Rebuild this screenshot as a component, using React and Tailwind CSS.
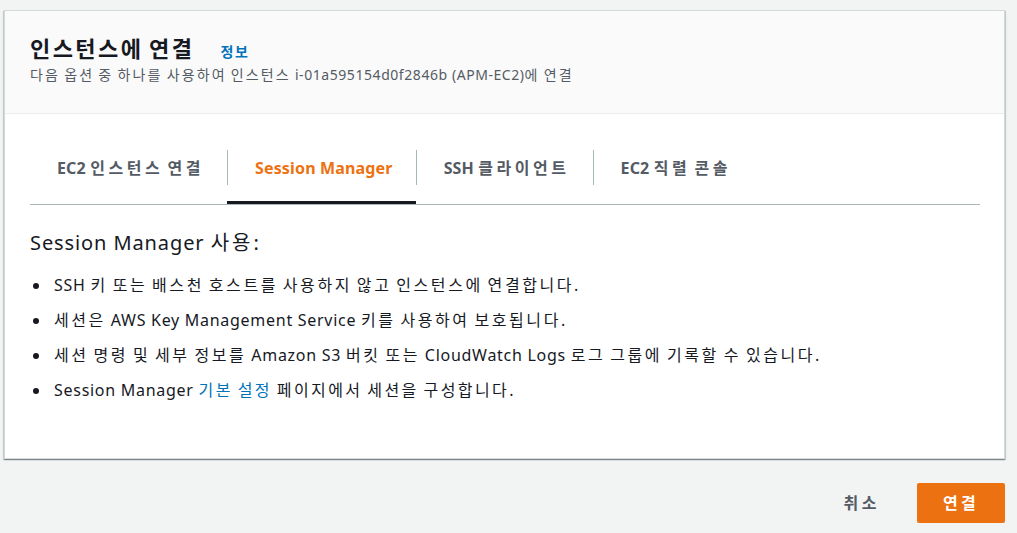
const font = { fontFamily: '"Noto Sans", "Noto Sans CJK KR", sans-serif' }

// Hangul runs get their own letter-spacing so the Korean reads as wide as the original
function K({ text, h }) {
  return text.split(/([\uac00-\ud7a3]+)/).map((p, i) =>
    /[\uac00-\ud7a3]/.test(p) ? (
      <span key={i} className={h}>
        {p}
      </span>
    ) : (
      p
    )
  )
}

const tabs = ['EC2 인스턴스 연결', 'Session Manager', 'SSH 클라이언트', 'EC2 직렬 콘솔']

const bullets = [
  'SSH 키 또는 배스천 호스트를 사용하지 않고 인스턴스에 연결합니다.',
  '세션은 AWS Key Management Service 키를 사용하여 보호됩니다.',
  '세션 명령 및 세부 정보를 Amazon S3 버킷 또는 CloudWatch Logs 로그 그룹에 기록할 수 있습니다.',
]

function Dot() {
  return <span className="w-[6px] h-[6px] rounded-full bg-[#16191f] ml-[3px] mr-[15px] shrink-0" />
}

function App() {
  const active = 1
  return (
    <div className="min-h-[533px] bg-[#f2f3f3] pt-[10px] pl-[4px]" style={font}>
      <div className="w-[1001px] bg-white border border-[#d5dbdb] shadow-[0_1px_1px_0_rgba(0,28,36,0.3),1px_1px_1px_0_rgba(0,28,36,0.15),-1px_1px_1px_0_rgba(0,28,36,0.15)]">
        <div className="bg-[#fafafa] border-b border-[#eaeded] px-[25px] pt-[22px] h-[103px]">
          <div className="flex items-baseline">
            <h2 className="text-[22px] leading-[30px] font-bold text-[#16191f]">
              <K text="인스턴스에 연결" h="tracking-[0.11em]" />
            </h2>
            <a className="ml-[26px] text-[14px] font-bold text-[#0073bb]">
              <K text="정보" h="tracking-[0.12em]" />
            </a>
          </div>
          <p className="text-[14px] leading-[22px] text-[#545b64] mt-[1px] tracking-[0.04em]">
            <K
              text="다음 옵션 중 하나를 사용하여 인스턴스 i-01a595154d0f2846b (APM-EC2)에 연결"
              h="tracking-[0.15em]"
            />
          </p>
        </div>
        <div className="px-[25px] pb-[50px]">
          <div className="flex border-b border-[#aab7b8] w-[950px]">
            {tabs.map((t, i) => (
              <div
                key={t}
                className={
                  'pt-[36px] pb-[16px] border-b-[3px] ' +
                  (i === active ? 'border-[#16191f]' : 'border-transparent')
                }
              >
                <div
                  className={
                    'h-[35px] flex items-center pl-[27px] pr-[23px] text-[16px] font-bold ' +
                    (i === 0 ? '' : 'border-l border-[#aab7b8] ') +
                    (i === active ? 'text-[#ec7211]' : 'text-[#545b64]')
                  }
                >
                  <span className="tracking-[0.01em]">
                    <K text={t} h="tracking-[0.22em]" />
                  </span>
                </div>
              </div>
            ))}
          </div>
          <h3 className="mt-[24px] text-[20px] leading-[28px] text-[#16191f] tracking-[0.045em]">
            <K text="Session Manager 사용:" h="tracking-[0.15em]" />
          </h3>
          <ul className="mt-[11px] text-[16px] leading-[35px] text-[#16191f] tracking-[0.045em]">
            {bullets.map((s) => (
              <li key={s} className="flex items-center">
                <Dot />
                <span>
                  <K text={s} h="tracking-[0.16em]" />
                </span>
              </li>
            ))}
            <li className="flex items-center">
              <Dot />
              <span>
                Session Manager{' '}
                <a className="text-[#0073bb]">
                  <K text="기본 설정" h="tracking-[0.15em]" />
                </a>{' '}
                <K text="페이지에서 세션을 구성합니다." h="tracking-[0.15em]" />
              </span>
            </li>
          </ul>
        </div>
      </div>
      <div className="w-[1001px] flex justify-end items-center mt-[24px]">
        <button className="text-[16px] font-bold text-[#545b64] px-[20px] h-[40px] mr-[17px]">
          <K text="취소" h="tracking-[0.22em]" />
        </button>
        <button className="h-[40px] w-[88px] rounded-[2px] bg-[#ec7211] text-white text-[16px] font-bold">
          <K text="연결" h="tracking-[0.2em]" />
        </button>
      </div>
    </div>
  )
}

export default App
